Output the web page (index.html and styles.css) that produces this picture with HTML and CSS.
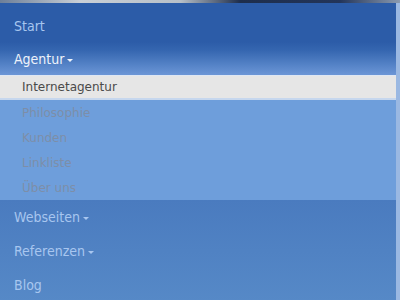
FILE: index.html
```html
<!DOCTYPE html>
<html lang="de">
<head>
    <meta charset="UTF-8">
    <meta name="viewport" content="width=device-width, initial-scale=1.0">
    <title>Menü</title>
    <link rel="stylesheet" href="styles.css">
</head>
<body>
    <!-- Streifen vom Kopfbild -->
    <div class="header-strip"></div>

    <!-- Hauptnavigation -->
    <nav class="mainnav">
        <ul class="menu">
            <li class="item"><a href="#">Start</a></li>
            <li class="item active">
                <a href="#" class="has-sub">Agentur<span class="caret"></span></a>
                <ul class="submenu">
                    <li class="current"><a href="#">Internetagentur</a></li>
                    <li><a href="#">Philosophie</a></li>
                    <li><a href="#">Kunden</a></li>
                    <li><a href="#">Linkliste</a></li>
                    <li><a href="#">Über uns</a></li>
                </ul>
            </li>
        </ul>
        <ul class="menu lower">
            <li class="item"><a href="#" class="has-sub">Webseiten<span class="caret"></span></a></li>
            <li class="item"><a href="#" class="has-sub">Referenzen<span class="caret"></span></a></li>
            <li class="item"><a href="#">Blog</a></li>
        </ul>
    </nav>
</body>
</html>
```
FILE: styles.css
```css
body {
    margin: 0;
    width: 400px;
    height: 300px;
    overflow: hidden;
    background-color: #5a8ac6;
    font-family: "DejaVu Sans Condensed", "DejaVu Sans", Verdana, sans-serif;
}

.header-strip {
    height: 3px;
    background: linear-gradient(90deg, #6d7f99 0%, #c9cfd6 20%, #b8c0c8 45%, #1e2e4c 60%, #23355a 85%, #8a9ab0 100%);
}

.mainnav {
    display: flex;
    flex-direction: column;
    border-right: 4px solid #9ab8e2;
    box-shadow: inset -2px 0 0 #3f6eb0;
}

ul {
    list-style: none;
    margin: 0;
    padding: 0;
}

.menu {
    padding-top: 6px;
    background-color: #2c5ca8;
}

.menu.lower {
    padding-top: 0;
    background: linear-gradient(180deg, #4a7bbf 0%, #5689c7 100%);
}

.item > a {
    display: flex;
    align-items: center;
    height: 33px;
    padding-left: 14px;
    font-size: 14px;
    color: #a8c6ef;
    text-decoration: none;
}

.menu.lower .item > a {
    height: 34px;
}

.item.active > a {
    color: #eef3fb;
    background: linear-gradient(180deg, #2c5ca8 0%, #3566b0 25%, #5583c7 70%, #6c96d6 100%);
}

.caret {
    display: inline-block;
    width: 0;
    height: 0;
    margin-left: 3px;
    margin-top: 3px;
    border-left: 3px solid transparent;
    border-right: 3px solid transparent;
    border-top: 3px solid currentColor;
}

.submenu {
    background-color: #6e9edb;
}

.submenu li a {
    display: flex;
    align-items: center;
    height: 25px;
    padding-left: 22px;
    font-family: "DejaVu Sans", Verdana, sans-serif;
    font-size: 12px;
    color: #7d8ea8;
    text-decoration: none;
}

.submenu li.current a {
    height: 22px;
    color: #4a4a4a;
    background-color: #e6e6e6;
    border-top: 1px solid #dfe7f3;
    border-bottom: 2px solid #c6d7ee;
}
```
